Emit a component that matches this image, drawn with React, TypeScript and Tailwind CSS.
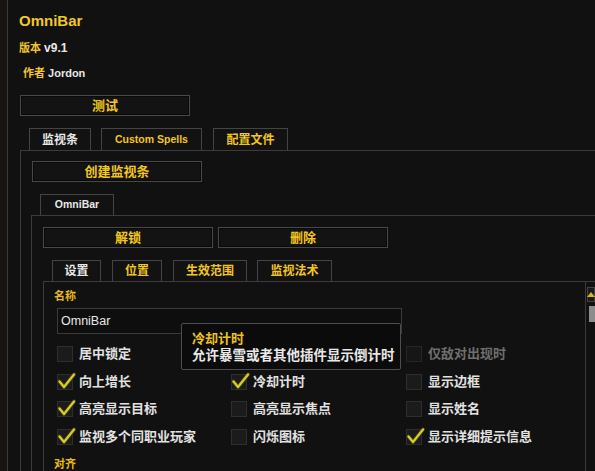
import React from "react";

const font = "font-['Liberation_Sans','Noto_Sans_CJK_SC',sans-serif]";

function Btn({ label, className = "" }: { label: string; className?: string }) {
  return (
    <div
      className={`flex h-[21px] w-[170px] items-center justify-center border border-[#484848] bg-[#131313] text-[13px] font-bold text-[#f2c61f] shadow-[inset_0_0_0_1px_#0a0a0a] ${className}`}
    >
      {label}
    </div>
  );
}

function Tab({ label, w, active = false, small = false }: { label: string; w: string; active?: boolean; small?: boolean }) {
  return (
    <div
      className={`flex h-full items-center justify-center border border-b-0 border-[#444] bg-[#121212] font-bold ${w} ${
        small ? "text-[10.5px]" : "text-[12px]"
      } ${active ? "text-[#e8e8e8]" : "text-[#f2c61f]"}`}
    >
      {label}
    </div>
  );
}

function Check({ label, checked = false, disabled = false }: { label: string; checked?: boolean; disabled?: boolean }) {
  return (
    <div className="flex h-[27.5px] items-start">
      <span
        className={`relative h-4 w-4 shrink-0 border ${
          disabled ? "border-[#262626] bg-[#161616]" : "border-[#2e2e2e] bg-[#1b1b1b]"
        }`}
      >
        {checked && (
          <svg className="absolute -left-[1px] -top-[3px]" width="19" height="19" viewBox="0 0 19 19">
            <polyline points="2.5,9.5 7,15 17,2.5" fill="none" stroke="#3a3510" strokeWidth="4.2" strokeLinecap="round" strokeLinejoin="round" />
            <polyline points="2.5,9.5 7,15 17,2.5" fill="none" stroke="#d2cc2e" strokeWidth="2.4" strokeLinecap="round" strokeLinejoin="round" />
          </svg>
        )}
      </span>
      <span
        className={`ml-[6px] text-[13px] font-bold leading-[16px] ${disabled ? "text-[#6e6e6e]" : "text-[#e2e2e2]"}`}
      >
        {label}
      </span>
    </div>
  );
}

export default function App() {
  return (
    <div className={`flex h-[471px] w-[595px] overflow-hidden bg-[#111111] ${font}`}>
      {/* Left frame edge */}
      <div className="w-[8px] shrink-0 border-r border-[#3a3a3a] bg-[#19140f]" />

      <div className="flex min-w-0 flex-1 flex-col pl-[11px] pt-[12px]">
        <div className="text-[15px] font-bold leading-[18px] text-[#f2c829]">OmniBar</div>
        <div className="mt-[11px] text-[11px] font-bold leading-[14px] text-[#f2c829]">
          版本 <span className="text-[12px] text-[#e8e8e8]">v9.1</span>
        </div>
        <div className="mt-[11px] pl-[4px] text-[11px] font-bold leading-[14px] text-[#f2c829]">
          作者 <span className="text-[#e8e8e8]">Jordon</span>
        </div>

        <Btn label="测试" className="ml-[1px] mt-[15px]" />

        {/* Top tabs */}
        <div className="ml-[10px] mt-[12px] flex h-[22px] gap-[10px]">
          <Tab label="监视条" w="w-[62px]" active />
          <Tab label="Custom Spells" w="w-[101px]" small />
          <div className="ml-[1px] h-full">
            <Tab label="配置文件" w="w-[75px]" />
          </div>
        </div>

        {/* Panel 1 */}
        <div className="ml-[1px] flex flex-1 flex-col border-l border-t border-[#3c3c3c] pl-[10px] pt-[10px]">
          <Btn label="创建监视条" className="ml-[1px]" />

          <div className="ml-[9px] mt-[12px] flex h-[21px]">
            <Tab label="OmniBar" w="w-[74px]" active small />
          </div>

          {/* Panel 2 */}
          <div className="flex flex-1 flex-col border-l border-t border-[#3c3c3c] pl-[11px] pt-[11px]">
            <div className="flex gap-[5px]">
              <Btn label="解锁" />
              <Btn label="删除" />
            </div>

            <div className="ml-[9px] mt-[12px] flex h-[21px] gap-[11px]">
              <Tab label="设置" w="w-[49px]" active />
              <Tab label="位置" w="w-[50px]" />
              <Tab label="生效范围" w="w-[74px]" />
              <div className="-ml-[1px] h-full">
                <Tab label="监视法术" w="w-[75px]" />
              </div>
            </div>

            {/* Panel 3 */}
            <div className="relative flex flex-1 border-l border-t border-[#3c3c3c]">
              <div className="flex-1 pl-[10px] pt-[7px]">
                <div className="text-[11px] font-bold leading-[14px] text-[#e9b916]">名称</div>
                <div className="ml-[3px] mt-[5px] flex h-[26px] w-[345px] items-center border border-[#3a3a3a] bg-[#0e0e0e] pl-[3px] text-[12.5px] text-[#e8e8e8]">
                  OmniBar
                </div>

                <div className="ml-[3px] mt-[12px] grid grid-cols-[174px_175px_175px]">
                  <Check label="居中锁定" />
                  <div />
                  <Check label="仅敌对出现时" disabled />

                  <Check label="向上增长" checked />
                  <Check label="冷却计时" checked />
                  <Check label="显示边框" />

                  <Check label="高亮显示目标" checked />
                  <Check label="高亮显示焦点" />
                  <Check label="显示姓名" />

                  <Check label="监视多个同职业玩家" checked />
                  <Check label="闪烁图标" />
                  <Check label="显示详细提示信息" checked />
                </div>

                <div className="mt-[1px] text-[11px] font-bold leading-[14px] text-[#e9b916]">对齐</div>
              </div>

              {/* Scrollbar */}
              <div className="w-[10px] shrink-0 border-l border-[#3a3a3a] pt-[5px]">
                <div className="ml-[1px] flex h-[15px] items-center justify-center border border-[#444] bg-[#1a1a1a]">
                  <span className="h-0 w-0 border-x-[4px] border-b-[5px] border-x-transparent border-b-[#d9b51c]" />
                </div>
                <div className="ml-[3px] mt-[4px] h-[16px] bg-[#8c8c8c]" />
              </div>

              {/* Tooltip */}
              <div className="absolute left-[137px] top-[41px] h-[47px] w-[220px] rounded-[2px] border border-[#4d4d4d] bg-[#0b0b0b] pl-[10px] pt-[7px]">
                <div className="text-[13px] font-bold leading-[16px] text-[#eec21c]">冷却计时</div>
                <div className="whitespace-nowrap text-[13.5px] font-bold leading-[17px] text-[#e8e8e8]">
                  允许暴雪或者其他插件显示倒计时
                </div>
              </div>
            </div>
          </div>
        </div>
      </div>
    </div>
  );
}
